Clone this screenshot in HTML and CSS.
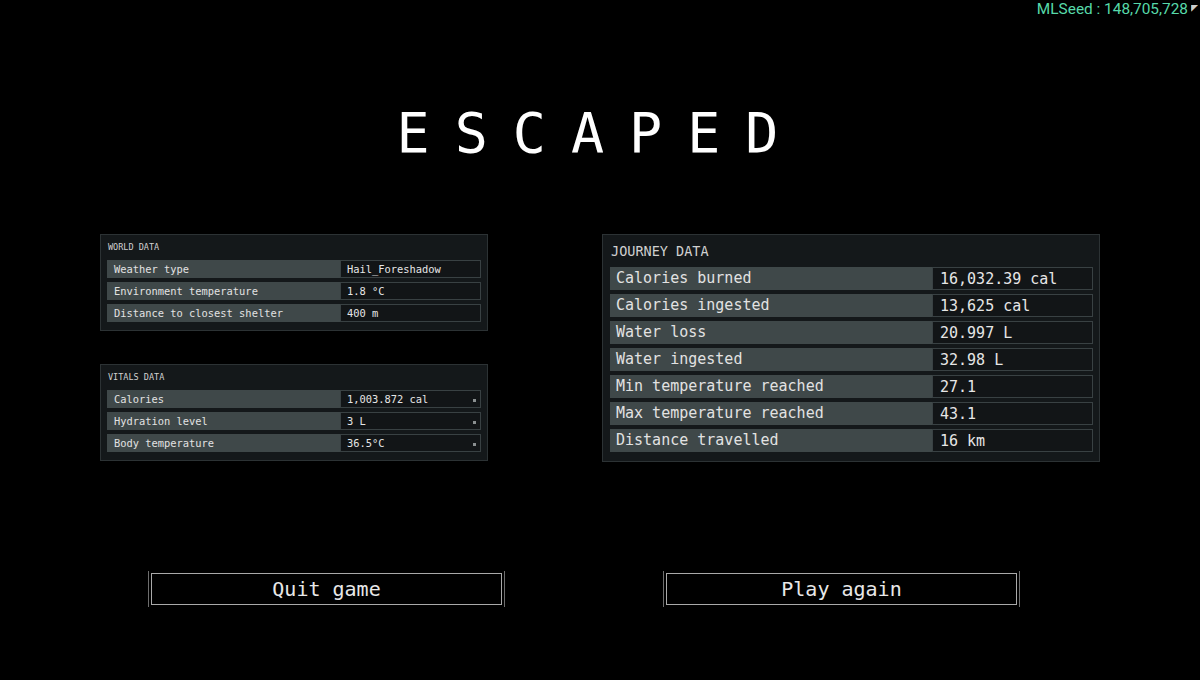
FILE: index.html
```html
<!DOCTYPE html>
<html lang="en">
<head>
  <meta charset="UTF-8">
  <meta name="viewport" content="width=device-width, initial-scale=1.0">
  <title>Escaped</title>
  <link rel="stylesheet" href="styles.css">
</head>
<body>
  <div class="seed">MLSeed : 148,705,728 <span class="cursor">&#9698;</span></div>

  <h1 class="title">ESCAPED</h1>

  <div class="panels">
    <div class="col-left">
      <div class="panel small">
        <div class="panel-title">WORLD DATA</div>
        <div class="rows">
          <div class="row"><div class="label">Weather type</div><div class="value">Hail_Foreshadow</div></div>
          <div class="row"><div class="label">Environment temperature</div><div class="value">1.8 °C</div></div>
          <div class="row"><div class="label">Distance to closest shelter</div><div class="value">400 m</div></div>
        </div>
      </div>

      <div class="panel small">
        <div class="panel-title">VITALS DATA</div>
        <div class="rows">
          <div class="row"><div class="label">Calories</div><div class="value">1,003.872 cal<i class="dot"></i></div></div>
          <div class="row"><div class="label">Hydration level</div><div class="value">3 L<i class="dot"></i></div></div>
          <div class="row"><div class="label">Body temperature</div><div class="value">36.5°C<i class="dot"></i></div></div>
        </div>
      </div>
    </div>

    <div class="panel big">
      <div class="panel-title">JOURNEY DATA</div>
      <div class="rows">
        <div class="row"><div class="label">Calories burned</div><div class="value">16,032.39 cal</div></div>
        <div class="row"><div class="label">Calories ingested</div><div class="value">13,625 cal</div></div>
        <div class="row"><div class="label">Water loss</div><div class="value">20.997 L</div></div>
        <div class="row"><div class="label">Water ingested</div><div class="value">32.98 L</div></div>
        <div class="row"><div class="label">Min temperature reached</div><div class="value">27.1</div></div>
        <div class="row"><div class="label">Max temperature reached</div><div class="value">43.1</div></div>
        <div class="row"><div class="label">Distance travelled</div><div class="value">16 km</div></div>
      </div>
    </div>
  </div>

  <div class="actions">
    <button type="button" class="btn"><span>Quit game</span></button>
    <button type="button" class="btn"><span>Play again</span></button>
  </div>
</body>
</html>
```

FILE: styles.css
```css
body {
  margin: 0;
  background-color: #000;
  color: #dcdcdc;
  font-family: "DejaVu Sans Mono", monospace;
  width: 1200px;
  height: 680px;
  overflow: hidden;
}

.seed {
  display: flex;
  justify-content: flex-end;
  align-items: center;
  gap: 3px;
  height: 18px;
  padding-right: 2px;
  font-family: Roboto, "Liberation Sans", sans-serif;
  font-size: 15.4px;
  color: #57d9a9;
}
.cursor {
  font-size: 9px;
  color: #ccc;
  transform: rotate(180deg);
}

.title {
  margin: 88px 0 0;
  font-size: 55px;
  font-weight: normal;
  line-height: 55px;
  letter-spacing: 25px;
  text-align: center;
  color: #fff;
}

.panels {
  display: flex;
  align-items: flex-start;
  gap: 114px;
  margin-top: 73px;
  padding-left: 100px;
}
.col-left {
  display: flex;
  flex-direction: column;
  gap: 33px;
}

.panel {
  background-color: #14181a;
  border: 1px solid #2c3234;
}
.panel.small {
  width: 374px;
  padding: 0 6px 8px 6px;
}
.panel.big {
  width: 483px;
  padding: 0 6px 9px 7px;
}

.panel-title {
  color: #d0d0d0;
}
.small .panel-title {
  font-size: 8.5px;
  line-height: 25px;
  padding-left: 1px;
}
.big .panel-title {
  font-size: 13.5px;
  line-height: 32px;
  padding-left: 1px;
}

.rows {
  display: flex;
  flex-direction: column;
  gap: 4px;
}
.row {
  display: flex;
}
.label {
  background-color: #3f4849;
  color: #e2e2e2;
  white-space: nowrap;
}
.value {
  position: relative;
  background-color: #121517;
  border: 1px solid #394143;
  box-sizing: border-box;
  color: #e6e6e6;
  white-space: nowrap;
}

.small .row { height: 18px; }
.small .label {
  width: 226px;
  padding-left: 7px;
  font-size: 10.4px;
  line-height: 18px;
}
.small .value {
  width: 141px;
  padding-left: 6px;
  font-size: 10.4px;
  line-height: 16px;
}

.big .row { height: 23px; }
.big .label {
  width: 316px;
  padding-left: 6px;
  font-size: 15px;
  line-height: 23px;
}
.big .value {
  width: 161px;
  padding-left: 7px;
  font-size: 15px;
  line-height: 22px;
}

.dot {
  position: absolute;
  right: 4px;
  top: 8px;
  width: 3px;
  height: 3px;
  background-color: #8a8f90;
}

.actions {
  display: flex;
  gap: 158px;
  margin-top: 109px;
  padding-left: 148px;
}
.btn {
  width: 357px;
  height: 36px;
  padding: 2px 2px;
  background: none;
  border: none;
  border-left: 1px solid #6e6e6e;
  border-right: 1px solid #6e6e6e;
  cursor: pointer;
}
.btn span {
  display: block;
  height: 100%;
  box-sizing: border-box;
  border: 1px solid #a9a9a9;
  font-family: "DejaVu Sans Mono", monospace;
  font-size: 20px;
  line-height: 30px;
  color: #e8e8e8;
}
```
